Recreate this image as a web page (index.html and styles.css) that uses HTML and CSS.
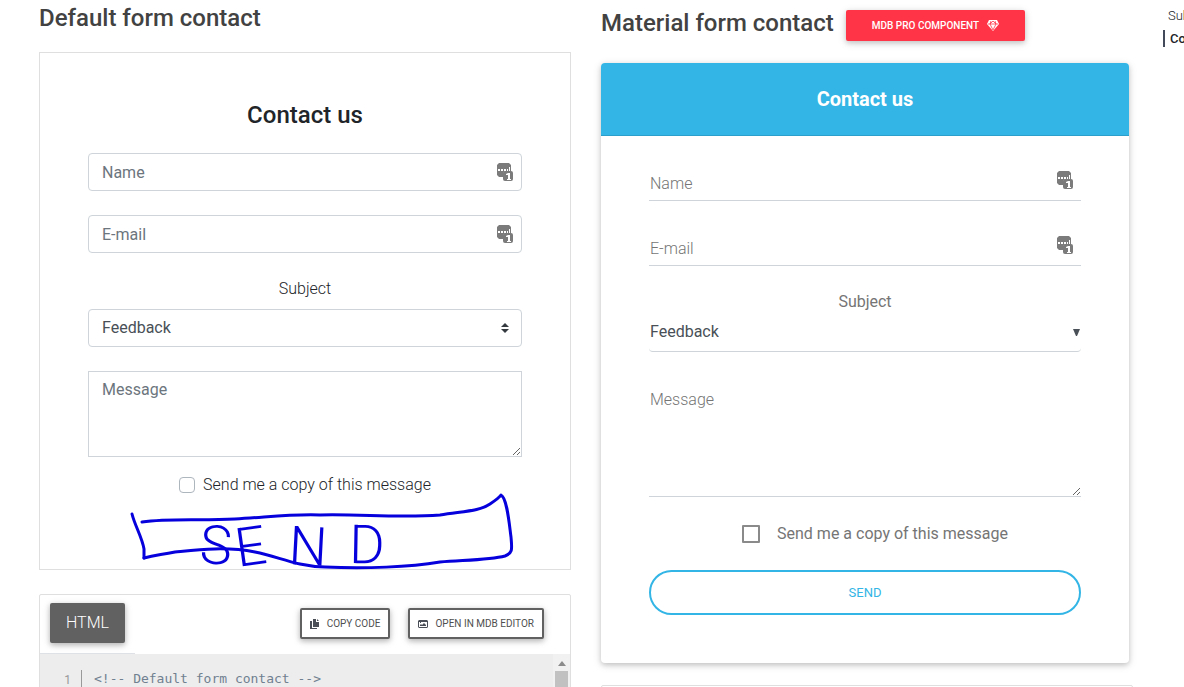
FILE: index.html
```html
<!DOCTYPE html>
<html lang="en">
<head>
  <meta charset="UTF-8" />
  <meta name="viewport" content="width=device-width, initial-scale=1.0" />
  <title>Form contact</title>
  <link rel="stylesheet" href="styles.css">
</head>
<body>

<!-- shared icons -->
<svg class="sprite" aria-hidden="true">
  <symbol id="icon-autofill" viewBox="0 0 16 18">
    <path fill="#7b7b7b" d="M2 0h10l2 2v6h-6l-2 2v4H2l-2-2V2z"/>
    <path fill="#fff" d="M1 6h2v2H1zM4 6h2v2H4zM7 6h2v2H7zM10 6h1v2h-1zM12 4h1v4h-1z"/>
    <rect x="6" y="8" width="10" height="10" rx="2" fill="#7b7b7b"/>
    <path fill="#fff" d="M11 10h2v6h1v1h-4v-1h1v-4H9v-1z"/>
  </symbol>
</svg>

<div class="page">
  <section class="column">
    <h2>Default form contact</h2>

    <form class="default-form">
      <h4>Contact us</h4>

      <div class="field">
        <input type="text" class="form-control" placeholder="Name" aria-label="Name">
        <svg class="autofill"><use href="#icon-autofill"/></svg>
      </div>

      <div class="field">
        <input type="email" class="form-control" placeholder="E-mail" aria-label="E-mail">
        <svg class="autofill"><use href="#icon-autofill"/></svg>
      </div>

      <label class="subject" for="defaultSubject">Subject</label>
      <div class="field">
        <select class="form-control" id="defaultSubject">
          <option>Feedback</option>
        </select>
        <svg class="sort" viewBox="0 0 8 10"><path fill="#343a40" d="M4 0l4 4H0zM4 10L0 6h8z"/></svg>
      </div>

      <textarea class="form-control message" rows="3" placeholder="Message" aria-label="Message"></textarea>

      <div class="check">
        <input type="checkbox" id="defaultCopy">
        <label for="defaultCopy">Send me a copy of this message</label>
      </div>

      <button type="submit" class="sketch-btn">
        <svg viewBox="0 0 382 78">
          <g fill="none" stroke="#0600dc" stroke-width="3" stroke-linecap="round" stroke-linejoin="round">
            <path d="M2 21C5 33 12 44 14 56L14 65"/>
            <path d="M12 29C40 25 70 28 105 26C140 24 160 21 190 22C230 21 270 25 310 22C335 18 350 18 360 11C366 7 369 5 371 2C377 5 379 29 381 44C382 56 383 60 375 63C360 67 335 67 310 69C280 74 235 76 195 74C165 73 150 64 125 59C95 53 65 57 45 59C30 62 25 62 14 65"/>
          </g>
          <text class="ink" x="69 108 158 219" y="70 74 71 70" rotate="3 -8 3 1">SEND</text>
        </svg>
      </button>
    </form>

    <div class="code-box">
      <div class="code-head">
        <div class="tab"><button type="button" class="tab-btn">HTML</button></div>
        <div class="code-actions">
          <button type="button" class="outline-btn">
            <svg viewBox="0 0 10 10"><path fill="#4a4f57" d="M3 0h3v3h3v5H3zM7 0l2 2H7zM0 2h2v7h5v1H0z"/></svg>
            Copy code
          </button>
          <button type="button" class="outline-btn">
            <svg viewBox="0 0 10 10"><path fill="#4a4f57" fill-rule="evenodd" d="M1 1h8l1 1v6L9 9H1L0 8V2zM1 3v5h8V3z"/><path fill="#4a4f57" d="M2 7V6l1-1 1 1 2-2 2 2v1zM2 3h1v1H2z"/></svg>
            Open in MDB editor
          </button>
        </div>
      </div>
      <div class="code-body">
        <span class="line-no">1</span>
        <code>&lt;!-- Default form contact --&gt;</code>
        <div class="scrollbar"><svg viewBox="0 0 8 5"><path fill="#8b8b8b" d="M4 0l4 5H0z"/></svg><span></span></div>
      </div>
    </div>
  </section>

  <section class="column material">
    <div class="title-row">
      <h2>Material form contact</h2>
      <a class="pro-btn" href="#">MDB Pro component
        <svg viewBox="0 0 12 11"><path fill="#fff" d="M2 0h8l2 4-6 7-6-7z"/><path fill="none" stroke="#ff3547" stroke-width=".8" d="M1 4h10M4 1L3 4l3 6 3-6-1-3M3 4l3-3 3 3"/></svg>
      </a>
    </div>

    <div class="card">
      <h5>Contact us</h5>
      <form class="material-form">
        <div class="field">
          <input type="text" class="md-control" placeholder="Name" aria-label="Name">
          <svg class="autofill"><use href="#icon-autofill"/></svg>
        </div>

        <div class="field">
          <input type="email" class="md-control" placeholder="E-mail" aria-label="E-mail">
          <svg class="autofill"><use href="#icon-autofill"/></svg>
        </div>

        <label class="subject" for="materialSubject">Subject</label>
        <div class="field">
          <select class="md-control" id="materialSubject">
            <option>Feedback</option>
          </select>
          <svg class="caret" viewBox="0 0 8 8"><path fill="#495057" d="M1 1h7L5 8H4z"/></svg>
        </div>

        <textarea class="md-control message" placeholder="Message" aria-label="Message"></textarea>

        <div class="check">
          <input type="checkbox" id="materialCopy">
          <label for="materialCopy">Send me a copy of this message</label>
        </div>

        <button type="submit" class="send-btn">Send</button>
      </form>
    </div>

    <div class="code-box"></div>
  </section>

  <nav class="toc">
    <a href="#">Sub</a>
    <a href="#" class="active">Co</a>
  </nav>
</div>

</body>
</html>
```

FILE: styles.css
```css
* { box-sizing: border-box; }
body { margin: 0; height: 100vh; overflow: hidden; font-family: Roboto, Arial, sans-serif; font-size: 16px; font-weight: 300; line-height: 24px; color: #212529; background: #fff; }
input, select, textarea, button { font-family: inherit; font-size: 16px; line-height: 24px; }
svg { display: block; }
.sprite { position: absolute; width: 0; height: 0; }

.page { display: grid; grid-template-columns: minmax(0, 1fr) minmax(0, 1fr) 21px; column-gap: 30px; padding: 4px 0 0 39px; }
h2, h4, h5 { margin: 0; font-weight: 500; }
h2 { font-size: 24px; line-height: 28px; color: #424242; }

/* default form */
.default-form { margin: 20px 0 24px; padding: 48px 48px 0; border: 1px solid #dfdfdf; text-align: center; }
h4 { font-size: 24px; line-height: 28px; margin-bottom: 24px; }
.field { position: relative; margin-bottom: 24px; }
.form-control { display: block; width: 100%; height: 38px; padding: 6px 13px; border: 1px solid #ced4da; border-radius: 4px; background: #fff; color: #495057; font-weight: 400; appearance: none; outline: none; }
.form-control::placeholder { color: #6c757d; opacity: 1; }
.autofill { position: absolute; right: 9px; top: 10px; width: 16px; height: 18px; }
.sort { position: absolute; right: 13px; top: 14px; width: 8px; height: 10px; }
.subject { display: block; margin-bottom: 8px; }
.form-control.message { height: 86px; border-radius: 0; }

.check { display: flex; justify-content: center; align-items: center; gap: 8px; margin-top: 16px; }
.check input { appearance: none; width: 16px; height: 16px; margin: 0; border: 1px solid #adb5bd; border-radius: 4px; background: #fff; }

/* hand drawn button */
.sketch-btn { position: relative; display: block; width: 100%; height: 72px; padding: 0; border: 0; background: none; }
.sketch-btn svg { position: absolute; right: 10px; top: -4px; width: 382px; height: 78px; overflow: visible; }
.ink { font-size: 54px; font-weight: 300; fill: #0600dc; }

/* code box */
.code-box { min-height: 200px; border: 1px solid #dfdfdf; border-radius: 2px 2px 0 0; }
.code-head { display: flex; justify-content: space-between; height: 59px; }
.tab { padding: 8px 10px; border-bottom: 1px solid #dee2e6; }
.tab-btn { height: 40px; padding: 0 16px; border: 0; border-radius: 2px; background: #616161; color: #fff; font-weight: 300; box-shadow: 0 2px 5px rgba(0,0,0,0.2), 0 2px 8px rgba(0,0,0,0.14); }
.code-actions { display: flex; gap: 18px; padding: 13px 26px 0 0; }
.outline-btn { display: flex; align-items: center; gap: 7px; height: 31px; padding: 0 8px; border: 2px solid #616161; border-radius: 2px; background: #fff; color: #4f4f4f; font-size: 10px; font-weight: 400; text-transform: uppercase; box-shadow: 0 2px 5px rgba(0,0,0,0.2), 0 2px 8px rgba(0,0,0,0.14); }
.outline-btn svg { width: 10px; height: 10px; }
.code-body { display: flex; height: 140px; background: #ededed; }
.line-no { width: 42px; margin-top: 16px; padding-right: 10px; border-right: 1px solid #999; color: #999; font-size: 12px; line-height: 20px; font-weight: 400; text-align: right; }
.code-body code { flex: 1; margin-top: 15px; padding-left: 12px; font-family: "DejaVu Sans Mono", monospace; font-size: 13px; line-height: 20px; color: #708090; }
.scrollbar { width: 17px; padding: 7px 2px 0; background: #f1f1f1; }
.scrollbar svg { width: 8px; height: 5px; margin: 0 auto 5px; }
.scrollbar span { display: block; height: 100px; background: #c1c1c1; }

/* material form */
.title-row { display: flex; gap: 12px; height: 31px; margin: 5px 0 23px; }
.pro-btn { display: flex; align-items: center; gap: 8px; height: 31px; margin-top: 1px; padding: 0 26px; border-radius: 2px; background: #ff3547; color: #fff; font-size: 10px; font-weight: 500; text-decoration: none; text-transform: uppercase; box-shadow: 0 2px 5px rgba(0,0,0,0.16), 0 2px 10px rgba(0,0,0,0.12); }
.pro-btn svg { width: 12px; height: 11px; }
.card { margin: 0 4px 22px 0; border-radius: 4px; box-shadow: 0 2px 5px rgba(0,0,0,0.16), 0 2px 10px rgba(0,0,0,0.12); }
h5 { padding: 24px; border-bottom: 1px solid #2d9fcb; border-radius: 4px 4px 0 0; background: #33b5e5; color: #fff; font-size: 20px; line-height: 24px; font-weight: 700; text-align: center; }
.material-form { padding: 27px 48px 48px; text-align: center; }
.material .field { margin-bottom: 27px; }
.md-control { display: block; width: 100%; height: 38px; padding: 8px 1px 5px; border: 0; border-bottom: 1px solid #ced4da; border-radius: 0; background: transparent; color: #495057; font-weight: 400; appearance: none; outline: none; }
.md-control::placeholder { color: #757575; opacity: 1; font-weight: 300; }
select.md-control { padding: 5px 1px 7px; border-radius: 4px; }
.md-control.message { height: 110px; padding: 1px; }
.material .subject { margin: -3px 0 0; color: #757575; font-weight: 400; }
.material .field .autofill { right: 8px; top: 8px; }
.caret { position: absolute; right: 1px; top: 14px; width: 8px; height: 8px; }
.material .field:has(select) { margin-bottom: 35px; }
.material .check { margin: 25px 0 24px; padding-left: 20px; gap: 17px; color: #757575; font-weight: 400; }
.material .check input { width: 18px; height: 18px; border: 2px solid #8a8a8a; border-radius: 1px; }
.send-btn { display: block; width: 100%; height: 45px; border: 2px solid #33b5e5; border-radius: 23px; background: #fff; color: #33b5e5; font-size: 13px; font-weight: 400; text-transform: uppercase; }

/* side nav */
.toc { display: flex; flex-direction: column; gap: 6px; padding-top: 3px; overflow: hidden; white-space: nowrap; font-size: 13px; line-height: 17px; }
.toc a { padding-left: 5px; color: #212529; text-decoration: none; }
.toc .active { border-left: 2px solid #434a59; font-weight: 500; }
```
